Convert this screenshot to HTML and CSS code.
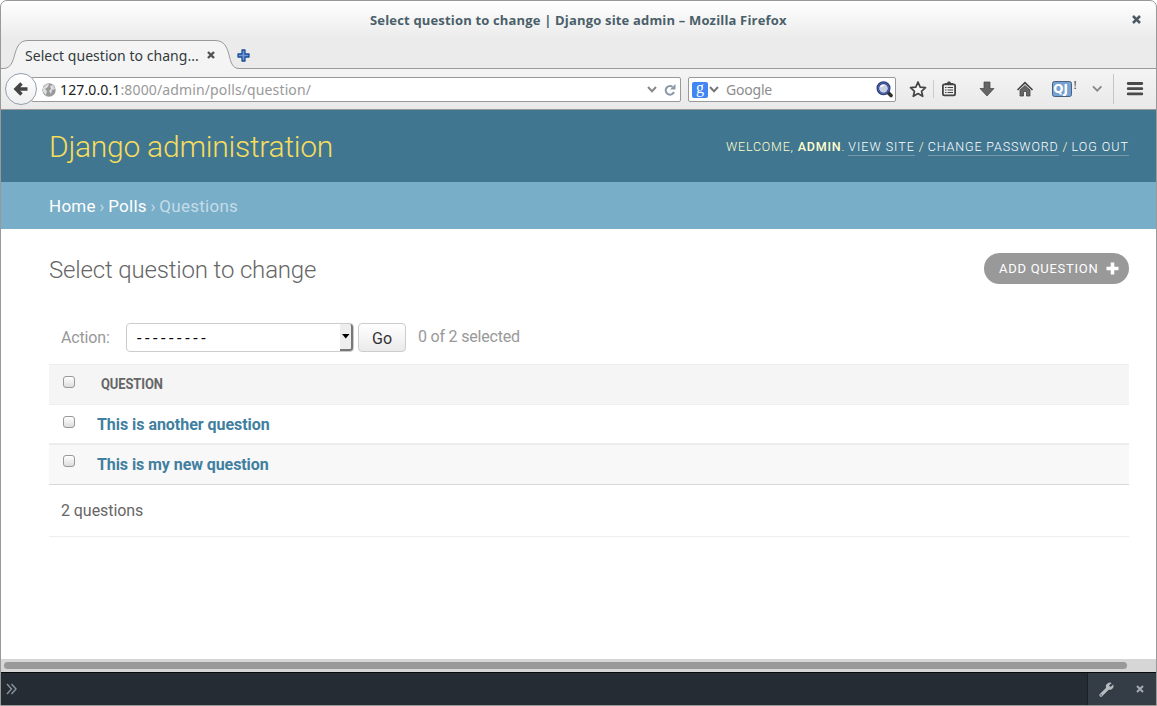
FILE: index.html
```html
<!DOCTYPE html>
<html lang="en">
<head>
<meta charset="utf-8">
<title>Select question to change | Django site admin</title>
<link rel="stylesheet" href="styles.css">
</head>
<body>
<div class="window">
  <header class="titlebar"><span class="window-title">Select question to change | Django site admin – Mozilla Firefox</span>
    <svg class="window-close" width="9" height="9" viewBox="0 0 9 9"><path d="M1 1 8 8M8 1 1 8" stroke="#4a5a64" stroke-width="2.5"/></svg>
  </header>
  <div class="tabs">
    <svg class="tab-shape" width="240" height="30" viewBox="0 0 240 30"><path d="M0 28.5H2C18 28.5 9 .5 27 .5H214C233 .5 224 28.5 238 28.5V30H0Z" fill="#f4f4f4"/><path d="M0 28.5H2C18 28.5 9 .5 27 .5H214C233 .5 224 28.5 238 28.5H240" fill="none" stroke="#999"/></svg>
    <span class="tab-label">Select question to chang...</span>
    <svg class="tab-close" width="8" height="8" viewBox="0 0 8 8"><path d="M1 1 7 7M7 1 1 7" stroke="#4f5355" stroke-width="2.4"/></svg>
    <svg class="tab-add" width="13" height="13" viewBox="0 0 13 13"><path d="M5 1h3v4h4v3H8v4H5V8H1V5h4Z" fill="#6d9bd8" stroke="#1d4b94" stroke-width="1.300" stroke-linejoin="round"/></svg>
  </div>
  <nav class="toolbar">
    <div class="back"><svg width="16" height="16" viewBox="0 0 16 16"><path d="M8.500 2.500 3 8 8.500 13.500M3 8H14.500" fill="none" stroke="#444" stroke-width="3.500"/></svg></div>
    <div class="url">
      <svg class="globe" width="14" height="14" viewBox="0 0 14 14"><circle cx="7" cy="7" r="6.700" fill="#999"/><path d="M1 5 4 1.500 7 1 6 4 3 6 5 8 4 12 1 9ZM8 3l3-1 2 4-3 1-1 4-2-3 2-2Z" fill="#ddd"/></svg>
      <span class="address"><b>127.0.0.1</b>:8000/admin/polls/question/</span>
      <svg class="chev" width="10" height="7" viewBox="0 0 10 7"><path d="M1 1 5 5.200 9 1" fill="none" stroke="#888" stroke-width="2"/></svg>
      <svg class="reload" width="12" height="12" viewBox="0 0 12 12"><path d="M10 8A4.300 4.300 0 1 1 8.500 2.800" fill="none" stroke="#8b98a7" stroke-width="2"/><path d="M11.500 0V5.500H6Z" fill="#8b98a7"/></svg>
    </div>
    <div class="search">
      <span class="g-logo">g</span>
      <svg class="chev2" width="10" height="7" viewBox="0 0 10 7"><path d="M1 1 5 5.200 9 1" fill="none" stroke="#777" stroke-width="2"/></svg>
      <span class="placeholder">Google</span>
      <svg class="lens" width="18" height="17" viewBox="0 0 18 17"><path d="M12 11.500 15 14.500" stroke="#332d2a" stroke-width="3.600" stroke-linecap="round"/><circle cx="7.500" cy="7.300" r="5.700" fill="#c7cfe5" stroke="#243474" stroke-width="2.600"/><circle cx="7.500" cy="7.300" r="5.500" fill="none" stroke="#5974bd" stroke-width="1"/><path d="M4.500 6Q6 4 8 4.500" fill="none" stroke="#fff" stroke-width="1.500"/></svg>
    </div>
    <svg class="actions" width="250" height="34" viewBox="905 72 250 34">
      <path d="M918 82 920.200 87.200 925.500 87.700 921.500 91.300 922.700 96.300 918 93.600 913.300 96.300 914.500 91.300 910.500 87.700 915.800 87.200Z" fill="#f7f7f7" stroke="#444" stroke-width="1.700" stroke-linejoin="round"/>
      <path d="M933.500 80V98" stroke="#ccc"/>
      <rect x="942.900" y="84.300" width="12.200" height="11" rx="1.300" fill="#eee" stroke="#444" stroke-width="1.800"/><path d="M945 84.500V83H947L948 81.500H950L951 83H953V85H945Z" fill="#444"/><path d="M945 87.500h1.500M947.500 87.500H953M945 90h1.500M947.500 90H953M945 92.500h1.500M947.500 92.500H953" stroke="#444" stroke-width="1.200"/>
      <path d="M984 82H990V88.500H994L987 96 980 88.500H984Z" fill="#666" stroke="#444" stroke-width=".7"/>
      <path d="M1017.500 90 1025 82.700 1032.500 90" fill="none" stroke="#444" stroke-width="1.700"/><path d="M1020 90 1025 85.500 1030 90V96H1026.500V91.500H1023.500V96H1020Z" fill="#666" stroke="#444" stroke-width=".8"/>
      <rect x="1052.500" y="81.500" width="19" height="15" rx="2" fill="#76a1d2" stroke="#47617f"/><text class="qj" x="1053.300" y="93">QJ</text><text class="bang" x="1073.700" y="89">!</text>
      <path d="M1093 86.300 1097.200 90.700 1101.400 86.300" fill="none" stroke="#888" stroke-width="1.800"/>
      <path d="M1113.500 74V104" stroke="#bfc6cd"/>
      <path d="M1128.200 83.500H1141.800M1128.200 88.700H1141.800M1128.200 93.900H1141.800" stroke="#4a4a4a" stroke-width="2.800" stroke-linecap="round"/>
    </svg>
  </nav>
  <main class="page">
    <div class="site-header"><h1>Django administration</h1>
      <div class="user"><span class="t-welcome">Welcome, <b>admin</b>. </span><a>View site</a><i>/</i><a class="t-pass">Change password</a><i>/</i><a>Log out</a></div>
    </div>
    <div class="crumbs"><a>Home</a> <span>›</span> <a>Polls</a> <span>›</span> <span>Questions</span></div>
    <div class="content">
      <div class="heading"><h2>Select question to change</h2>
        <a class="add"><span>Add question</span><svg width="13" height="13" viewBox="0 0 13 13"><path d="M6.500.5V12.500M.5 6.500H12.500" stroke="#fff" stroke-width="3.600"/></svg></a></div>
      <div class="filter"><label>Action:</label>
        <div class="select"><span>---------</span><div class="select-btn"><svg width="8" height="5" viewBox="0 0 8 5"><path d="M0 0H7.500L3.750 4.500Z" fill="#000"/></svg></div></div>
        <button class="go">Go</button><span class="count">0 of 2 selected</span></div>
      <div class="results">
        <div class="row head"><i class="box"></i><span>Question</span></div>
        <div class="row first"><i class="box"></i><a class="q1">This is another question</a></div>
        <div class="row second"><i class="box"></i><a class="q2">This is my new question</a></div>
      </div>
      <div class="total"><span>2 questions</span></div>
    </div>
  </main>
  <div class="scroll"><div class="thumb"></div></div>
  <footer class="devbar">
    <svg class="prompt" width="11" height="12" viewBox="0 0 11 12"><path d="M1 1 5.500 6 1 11M5.500 1 10 6 5.500 11" fill="none" stroke="#8b939d" stroke-width="1.400"/></svg>
    <div class="dev-actions">
      <svg width="15" height="15" viewBox="0 0 15 15"><path d="M2 13.200 8.500 6.700" stroke="#b7bcc1" stroke-width="3.200" stroke-linecap="round"/><path d="M12.800.9 10 3.500 11.500 5 14.300 2.400Q15.200 5.200 13 7 10.700 8.600 8 7.200 5.800 4.500 7.600 2.200 9.700-.2 12.800.9Z" fill="#b7bcc1"/><circle cx="2.200" cy="12.900" r=".7" fill="#343c45"/></svg>
      <svg class="dev-close" width="8" height="8" viewBox="0 0 8 8"><path d="M1 1 7 7M7 1 1 7" stroke="#a4a9b0" stroke-width="2.100"/></svg>
    </div>
  </footer>
</div>
</body>
</html>
```
FILE: styles.css
```css
* { box-sizing: border-box; }
body { margin: 0; background: #fff; font-family: Roboto, sans-serif; }
svg { display: block; flex: none; }
h1, h2 { margin: 0; font-weight: 300; }
i { font-style: normal; }
.window { width: 1157px; height: 706px; border: 1px solid #999; border-radius: 7px 7px 0 0; overflow: hidden; display: flex; flex-direction: column; background: linear-gradient(#fff, #ebebeb 38px, #ebebeb); white-space: nowrap; }
.titlebar { height: 39px; display: flex; align-items: flex-start; justify-content: flex-end; }
.window-title { width: 417px; margin-right: 345px; margin-top: 9px; font: 700 13px/20px "Open Sans", sans-serif; color: #4a5f69; letter-spacing: .17px; }
.window-close { margin: 14px 15px 0 0; }
.tabs { height: 29px; display: grid; grid-template-columns: 24px 182px 32px 1fr; border-bottom: 1px solid #999; }
.tab-shape { grid-area: 1 / 1 / 2 / 5; }
.tab-label { grid-area: 1 / 2; font: 14px/20px "Noto Sans", sans-serif; color: #333a3d; margin-top: 6px; letter-spacing: .04px; z-index: 1; }
.tab-close { grid-area: 1 / 3; margin-top: 11px; }
.tab-add { grid-area: 1 / 4; margin-top: 9px; margin-left: -2px; }
.toolbar { height: 41px; display: flex; background: linear-gradient(#f4f4f4, #e9e9e9); border-bottom: 1px solid #999; }
.back { width: 32px; height: 32px; margin: 4px 0 0 4px; border: 1px solid #93a0ad; border-radius: 50%; background: linear-gradient(#fff, #f0f0f0); display: flex; align-items: center; justify-content: center; z-index: 1; flex: none; }
.url { width: 650px; height: 25px; margin: 8px 0 0 -6px; padding-left: 10px; border: 1px solid #999; border-radius: 2px; background: #fff; display: flex; align-items: center; font: 14px/20px "Noto Sans", sans-serif; color: #999; }
.address { margin: 1px 0 0 4px; width: 587px; letter-spacing: .13px; }
.address b { font-weight: 400; color: #222; }
.reload { margin-left: 7px; }
.search { width: 208px; height: 25px; margin: 8px 0 0 7px; border: 1px solid #999; border-radius: 2px; background: #fff; display: flex; align-items: center; padding-left: 3px; }
.g-logo { width: 16px; height: 16px; border-radius: 2px; background: #4285f4; color: #fff; text-align: center; font: 16px/12px "Liberation Serif", serif; }
.chev2 { margin-left: 1px; }
.placeholder { margin: 1px 0 0 7px; width: 150px; font: 14px/20px "Noto Sans", sans-serif; color: #8d8d8d; letter-spacing: -.2px; }
.actions { margin: 3px 0 0 9px; }
.qj { font: 700 12px "DejaVu Sans", sans-serif; fill: #fff; }
.bang { font: 10px "Noto Sans", sans-serif; fill: #222; }
.page { height: 549px; background: #fff; flex: none; }
.site-header { height: 72px; background: #417690; display: flex; justify-content: space-between; padding: 0 27px 0 48px; }
.site-header h1 { font-size: 30px; line-height: 73px; color: #f5dd5d; letter-spacing: -.25px; }
.user { height: 17px; margin-top: 28px; display: flex; font-size: 12.500px; line-height: 17px; color: #ffc; text-transform: uppercase; letter-spacing: 1px; }
.user b { font-weight: 500; }
.user a { color: #fff; font-weight: 300; border-bottom: 1px solid #7799aa; height: 18px; }
.user .t-pass { letter-spacing: .87px; }
.user i { margin: 0 3px 0 4px; font-weight: 300; }
.t-welcome { margin-right: 3px; font-weight: 300; letter-spacing: .8px; }
.crumbs { height: 47px; background: #79aec8; padding-left: 48px; font-size: 17px; line-height: 48px; color: #c4dce8; letter-spacing: .27px; word-spacing: -1px; }
.crumbs a { color: #fff; }
.content { padding: 24px 27px 0 48px; }
.heading { height: 70px; display: flex; justify-content: space-between; }
.heading h2 { font-size: 24px; line-height: 34px; color: #666; letter-spacing: -.16px; }
.add { width: 145px; height: 31px; border-radius: 16px; background: #999; color: #fff; padding: 0 10px 0 15px; display: flex; align-items: center; justify-content: space-between; font-size: 13px; text-transform: uppercase; letter-spacing: .72px; }
.filter { height: 40px; display: flex; padding-left: 12px; color: #999; font-size: 16px; line-height: 27px; }
.filter label { width: 65px; line-height: 29px; letter-spacing: -.15px; }
.select { width: 228px; height: 29px; border: 1px solid #ccc; border-radius: 4px; display: flex; justify-content: space-between; padding-left: 10px; color: #000; line-height: 30px; }
.select span { letter-spacing: 3.600px; }
.select-btn { width: 13px; height: 27px; background: #eee; border-right: 2px solid #777; border-bottom: 2px solid #777; border-radius: 0 3px 3px 0; display: flex; align-items: center; justify-content: center; }
.go { width: 48px; height: 29px; margin-left: 4px; border: 1px solid #ccc; border-radius: 4px; background: linear-gradient(#fff, #eaeaea); color: #333; font: 16px/29px Roboto, sans-serif; padding: 0; }
.count { margin-left: 12px; letter-spacing: -.2px; }
.results { border-top: 1px solid #eee; margin-top: 1px; }
.row { display: flex; padding-left: 14px; font-size: 16px; color: #417fa0; font-weight: 700; }
.row a { margin-left: 22px; line-height: 39px; }
.q1 { letter-spacing: -.04px; }
.q2 { letter-spacing: -.08px; }
.head { height: 40px; background: #f5f5f5; border-bottom: 1px solid #eee; font-size: 14px; color: #666; text-transform: uppercase; }
.head span { margin-left: 26px; line-height: 39px; letter-spacing: -.1px; transform: scaleX(.925); transform-origin: left; }
.first { height: 40px; border-bottom: 2px solid #ececec; }
.second { height: 40px; background: #f8f8f8; border-bottom: 1px solid #d8d8d8; }
.second a { line-height: 40px; }
.box { width: 12px; height: 12px; margin-top: 11px; border: 1px solid #999; border-radius: 3px; background: linear-gradient(#fff, #ddd); flex: none; }
.second .box { margin-top: 10px; }
.total { height: 52px; padding-left: 12px; font-size: 16px; line-height: 51px; color: #666; letter-spacing: -.06px; border-bottom: 1px solid #eee; }
.scroll { height: 13px; background: #d6d6d6; padding: 3px 29px 0 3px; flex: none; }
.thumb { height: 7px; border-radius: 4px; background: #999; }
.devbar { height: 33px; background: #252c33; border-top: 1px solid #080a0c; display: flex; justify-content: space-between; align-items: center; padding-left: 5px; flex: none; }
.dev-actions { width: 69px; height: 32px; background: #343c45; border-left: 1px solid #1b2025; display: flex; align-items: center; padding-left: 11px; gap: 22px; }
```
